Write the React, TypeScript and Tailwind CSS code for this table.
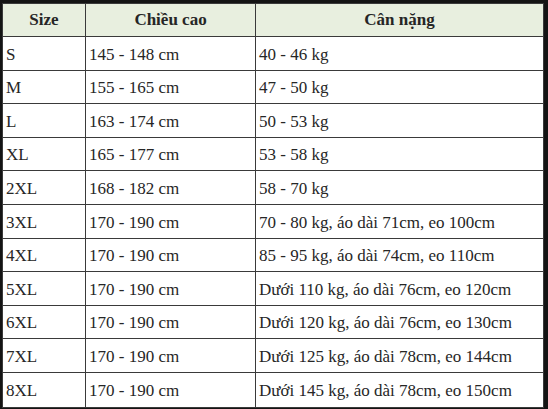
const rows: [string, string, string][] = [
  ["S", "145 - 148 cm", "40 - 46 kg"],
  ["M", "155 - 165 cm", "47 - 50 kg"],
  ["L", "163 - 174 cm", "50 - 53 kg"],
  ["XL", "165 - 177 cm", "53 - 58 kg"],
  ["2XL", "168 - 182 cm", "58 - 70 kg"],
  ["3XL", "170 - 190 cm", "70 - 80 kg, áo dài 71cm, eo 100cm"],
  ["4XL", "170 - 190 cm", "85 - 95 kg, áo dài 74cm, eo 110cm"],
  ["5XL", "170 - 190 cm", "Dưới 110 kg, áo dài 76cm, eo 120cm"],
  ["6XL", "170 - 190 cm", "Dưới 120 kg, áo dài 76cm, eo 130cm"],
  ["7XL", "170 - 190 cm", "Dưới 125 kg, áo dài 78cm, eo 144cm"],
  ["8XL", "170 - 190 cm", "Dưới 145 kg, áo dài 78cm, eo 150cm"],
];

export default function App() {
  return (
    <div className="w-[548px] h-[409px] bg-[#141414] pt-[3px] pl-[2px] pr-[4px] pb-[2px] overflow-hidden">
      <div
        className="bg-white border border-[#3a3a3a] text-[#262626] text-[17px]"
        style={{ fontFamily: '"Liberation Serif", "Times New Roman", serif' }}
      >
        {/* Header */}
        <div className="grid grid-cols-[83px_170px_1fr] h-[33px] bg-[#e8efdf] font-bold border-b border-[#3a3a3a]">
          <div className="flex items-center justify-center border-r border-[#3a3a3a]">Size</div>
          <div className="flex items-center justify-center border-r border-[#3a3a3a]">Chiều cao</div>
          <div className="flex items-center justify-center">Cân nặng</div>
        </div>

        {/* Rows */}
        {rows.map(([size, height, weight], i) => (
          <div
            key={size}
            className={`grid grid-cols-[83px_170px_1fr] h-[33.6px] ${
              i < rows.length - 1 ? "border-b border-[#3a3a3a]" : ""
            }`}
          >
            <div className="flex items-center pl-[3px] pt-[2px] border-r border-[#3a3a3a]">{size}</div>
            <div className="flex items-center pl-[3px] pt-[2px] border-r border-[#3a3a3a]">{height}</div>
            <div className="flex items-center pl-[3px] pt-[2px] whitespace-nowrap">{weight}</div>
          </div>
        ))}
      </div>
    </div>
  );
}
